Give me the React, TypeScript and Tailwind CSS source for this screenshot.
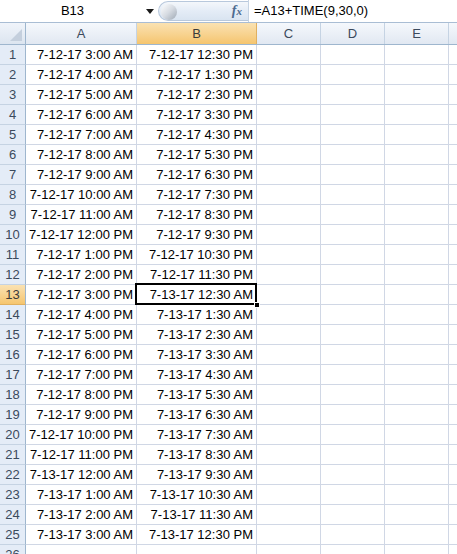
import React from "react";

function fmt(day: number, h: number, m: number) {
  const ap = h < 12 ? "AM" : "PM";
  let hh = h % 12;
  if (hh === 0) hh = 12;
  return `7-${day}-17 ${hh}:${m === 0 ? "00" : m} ${ap}`;
}

const data: [string, string][] = [];
for (let i = 0; i < 25; i++) {
  const a = 3 * 60 + i * 60;
  const b = a + 9 * 60 + 30;
  const ad = 12 + Math.floor(a / 1440);
  const bd = 12 + Math.floor(b / 1440);
  data.push([
    fmt(ad, Math.floor((a % 1440) / 60), a % 60),
    fmt(bd, Math.floor((b % 1440) / 60), b % 60),
  ]);
}

const font = { fontFamily: '"Liberation Sans", Arial, sans-serif' };

function ColHeader({ label, w, sel }: { label: string; w: string; sel?: boolean }) {
  return (
    <div
      className={`${w} h-full shrink-0 flex items-center justify-center border-r border-[#c5d3e3] text-[13px] ${
        sel
          ? "bg-gradient-to-b from-[#fae2b2] to-[#f5c56e] text-[#3b3b3b] border-r-[#e0b060]"
          : "bg-gradient-to-b from-[#f5f8fc] to-[#e1e8f2] text-[#3b4a5c]"
      }`}
    >
      {label}
    </div>
  );
}

export default function App() {
  return (
    <div className="w-[457px] h-[554px] overflow-hidden bg-white relative" style={font}>
      {/* Formula bar */}
      <div className="h-[23px] flex items-stretch border-b border-[#a9bdd4] bg-white">
        <div className="w-[158px] shrink-0 flex items-center relative">
          <div className="w-[145px] text-center text-[13px] text-black">B13</div>
          <svg className="absolute left-[146px] top-[9px]" width="8" height="5" viewBox="0 0 8 5">
            <path d="M0 0 H8 L4 5 Z" fill="#1a1a1a" />
          </svg>
        </div>
        <div className="w-[90px] shrink-0 relative flex items-center justify-end pr-[6px] bg-gradient-to-b from-[#f4f7fb] via-[#e4ecf6] to-[#d9e4f1] rounded-l-[11px] border-l border-t border-b border-[#b8c8dc] my-[1px]">
          <div className="absolute left-[2px] top-[2px] w-[16px] h-[16px] rounded-full bg-gradient-to-br from-[#ffffff] via-[#d6dbe2] to-[#9ea8b4]" />
          <span
            className="text-[#4d6b8f] italic font-bold text-[14px] leading-none"
            style={{ fontFamily: '"Liberation Serif", "DejaVu Serif", serif' }}
          >
            f<span className="text-[11px]">x</span>
          </span>
        </div>
        <div className="flex-1 flex items-center pl-[5px] text-[13px] text-black border-l border-[#c5d3e3]">
          =A13+TIME(9,30,0)
        </div>
      </div>

      {/* Column header */}
      <div className="h-[22px] flex border-b border-[#9eb6ce]">
        <div className="w-[26px] h-full shrink-0 border-r border-[#9eb6ce] bg-gradient-to-b from-[#f0f4fa] to-[#dce5f0] relative">
          <svg className="absolute right-[3px] bottom-[3px]" width="12" height="12" viewBox="0 0 12 12">
            <path d="M12 0 V12 H0 Z" fill="#c4cfdd" />
          </svg>
        </div>
        <ColHeader label="A" w="w-[111px]" />
        <ColHeader label="B" w="w-[120px]" sel />
        <ColHeader label="C" w="w-[64px]" />
        <ColHeader label="D" w="w-[64px]" />
        <ColHeader label="E" w="w-[64px]" />
        <ColHeader label="" w="w-[20px]" />
      </div>

      {/* Rows */}
      {[...data, ["", ""] as [string, string]].map(([a, b], i) => {
        const n = i + 1;
        const sel = n === 13;
        return (
          <div key={n} className="h-[20px] flex">
            <div
              className={`w-[26px] shrink-0 flex items-center justify-center border-r border-b text-[13px] ${
                sel
                  ? "bg-gradient-to-b from-[#fae2b2] to-[#f5c56e] border-r-[#9eb6ce] border-b-[#e0b060] text-[#3b3b3b]"
                  : "bg-[#e4ecf7] border-r-[#9eb6ce] border-b-[#c5d3e3] text-[#3b4a5c]"
              }`}
            >
              {n}
            </div>
            <div className="w-[111px] shrink-0 border-r border-b border-[#d0d7e5] flex items-center justify-end pr-[3px] text-[13px] text-black whitespace-nowrap">
              {a}
            </div>
            <div className="w-[120px] shrink-0 border-r border-b border-[#d0d7e5] flex items-center justify-end pr-[3px] text-[13px] text-black whitespace-nowrap relative">
              {sel && (
                <>
                  <div className="absolute left-[-2px] top-[-2px] right-[-1px] bottom-[-1px] border-2 border-black pointer-events-none" />
                  <div className="absolute right-[-4px] bottom-[-4px] w-[6px] h-[6px] bg-black border border-white z-10" />
                </>
              )}
              <span className="relative">{b}</span>
            </div>
            <div className="w-[64px] shrink-0 border-r border-b border-[#d0d7e5]" />
            <div className="w-[64px] shrink-0 border-r border-b border-[#d0d7e5]" />
            <div className="w-[64px] shrink-0 border-r border-b border-[#d0d7e5]" />
            <div className="w-[20px] shrink-0 border-b border-[#d0d7e5]" />
          </div>
        );
      })}
    </div>
  );
}
